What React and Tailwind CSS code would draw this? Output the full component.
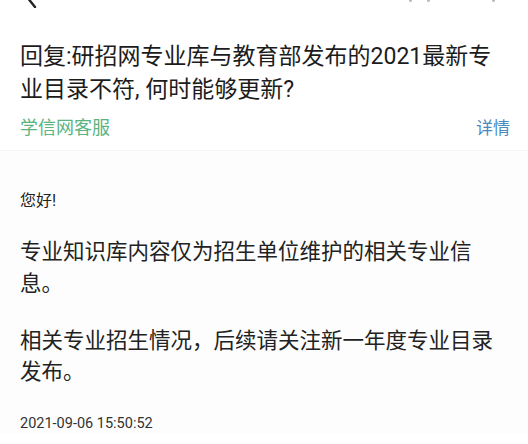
import React from "react";

const font = { fontFamily: 'Roboto, "Noto Sans CJK SC", sans-serif' };

const TopBar = () => (
  <div className="relative h-2 overflow-hidden">
    <svg className="absolute left-[24px] top-[-14px]" width="14" height="22" viewBox="0 0 14 22">
      <path d="M11 1 L3 11 L11 21" fill="none" stroke="#222" strokeWidth="2.4" strokeLinecap="round" />
    </svg>
    <span className="absolute left-[409px] top-[-2px] h-[4px] w-[3px] rounded-full bg-[#bbb]" />
    <span className="absolute left-[427px] top-[-2px] h-[4px] w-[3px] rounded-full bg-[#bbb]" />
    <span className="absolute left-[492px] top-[-2px] h-[4px] w-[3px] rounded-full bg-[#bbb]" />
  </div>
);

export default function App() {
  return (
    <div className="w-[528px] h-[444px] overflow-hidden bg-white text-[#222]" style={font}>
      <TopBar />
      <div className="px-[20px] pt-[32px]">
        <h1 className="text-[23px] leading-[33px] font-normal text-[#1c1c1c] pr-[16px]">
          回复:研招网专业库与教育部发布的2021最新专业目录不符, 何时能够更新?
        </h1>
        <div className="mt-[10px] flex items-center justify-between text-[18px] leading-[24px]">
          <span className="text-[#5bb381]">学信网客服</span>
          <span className="text-[#4b8bbf] text-[17px] mr-[-2px]">详情</span>
        </div>
      </div>
      <div className="mt-[10px] border-t border-[#f6f6f6] bg-[#fdfdfd] px-[20px] pt-[39px]">
        <p className="text-[16px] leading-[22px]">您好!</p>
        <p className="mt-[24px] text-[21.5px] leading-[32px] pr-[30px]">
          专业知识库内容仅为招生单位维护的相关专业信息。
        </p>
        <p className="mt-[25px] text-[21.5px] leading-[31px]">
          相关专业招生情况，后续请关注新一年度专业目录发布。
        </p>
        <p className="mt-[27px] text-[14.5px] leading-[20px] text-[#333]">2021-09-06 15:50:52</p>
      </div>
    </div>
  );
}
